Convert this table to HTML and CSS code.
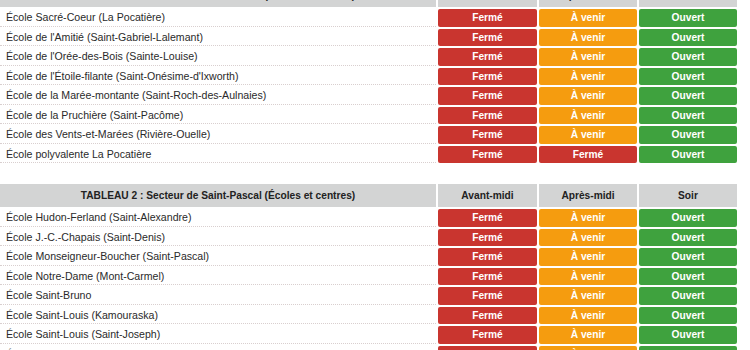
FILE: index.html
```html
<!DOCTYPE html>
<html lang="fr">
<head>
<meta charset="utf-8">
<title>État des écoles</title>
<link rel="stylesheet" href="styles.css">
</head>
<body>
<div class="page">
  <table class="status-table first">
    <colgroup><col class="c-name"><col class="c-am"><col class="c-pm"><col class="c-ev"></colgroup>
    <thead>
      <tr><th class="title">TABLEAU 1 : Secteur de La Pocatière (Écoles et centres)</th><th>Avant-midi</th><th>Après-midi</th><th>Soir</th></tr>
    </thead>
    <tbody>
      <tr><td class="name">École Sacré-Coeur (La Pocatière)</td><td class="st closed">Fermé</td><td class="st soon">À venir</td><td class="st open">Ouvert</td></tr>
      <tr><td class="name">École de l'Amitié (Saint-Gabriel-Lalemant)</td><td class="st closed">Fermé</td><td class="st soon">À venir</td><td class="st open">Ouvert</td></tr>
      <tr><td class="name">École de l'Orée-des-Bois (Sainte-Louise)</td><td class="st closed">Fermé</td><td class="st soon">À venir</td><td class="st open">Ouvert</td></tr>
      <tr><td class="name">École de l'Étoile-filante (Saint-Onésime-d'Ixworth)</td><td class="st closed">Fermé</td><td class="st soon">À venir</td><td class="st open">Ouvert</td></tr>
      <tr><td class="name">École de la Marée-montante (Saint-Roch-des-Aulnaies)</td><td class="st closed">Fermé</td><td class="st soon">À venir</td><td class="st open">Ouvert</td></tr>
      <tr><td class="name">École de la Pruchière (Saint-Pacôme)</td><td class="st closed">Fermé</td><td class="st soon">À venir</td><td class="st open">Ouvert</td></tr>
      <tr><td class="name">École des Vents-et-Marées (Rivière-Ouelle)</td><td class="st closed">Fermé</td><td class="st soon">À venir</td><td class="st open">Ouvert</td></tr>
      <tr><td class="name">École polyvalente La Pocatière</td><td class="st closed">Fermé</td><td class="st closed">Fermé</td><td class="st open">Ouvert</td></tr>
    </tbody>
  </table>

  <table class="status-table">
    <colgroup><col class="c-name"><col class="c-am"><col class="c-pm"><col class="c-ev"></colgroup>
    <thead>
      <tr><th class="title">TABLEAU 2 : Secteur de Saint-Pascal (Écoles et centres)</th><th>Avant-midi</th><th>Après-midi</th><th>Soir</th></tr>
    </thead>
    <tbody>
      <tr><td class="name">École Hudon-Ferland (Saint-Alexandre)</td><td class="st closed">Fermé</td><td class="st soon">À venir</td><td class="st open">Ouvert</td></tr>
      <tr><td class="name">École J.-C.-Chapais (Saint-Denis)</td><td class="st closed">Fermé</td><td class="st soon">À venir</td><td class="st open">Ouvert</td></tr>
      <tr><td class="name">École Monseigneur-Boucher (Saint-Pascal)</td><td class="st closed">Fermé</td><td class="st soon">À venir</td><td class="st open">Ouvert</td></tr>
      <tr><td class="name">École Notre-Dame (Mont-Carmel)</td><td class="st closed">Fermé</td><td class="st soon">À venir</td><td class="st open">Ouvert</td></tr>
      <tr><td class="name">École Saint-Bruno</td><td class="st closed">Fermé</td><td class="st soon">À venir</td><td class="st open">Ouvert</td></tr>
      <tr><td class="name">École Saint-Louis (Kamouraska)</td><td class="st closed">Fermé</td><td class="st soon">À venir</td><td class="st open">Ouvert</td></tr>
      <tr><td class="name">École Saint-Louis (Saint-Joseph)</td><td class="st closed">Fermé</td><td class="st soon">À venir</td><td class="st open">Ouvert</td></tr>
      <tr><td class="name">École Saint-Philippe (Saint-Philippe-de-Néri)</td><td class="st closed">Fermé</td><td class="st soon">À venir</td><td class="st open">Ouvert</td></tr>
    </tbody>
  </table>
</div>
</body>
</html>
```

FILE: styles.css
```css
html, body {
  margin: 0;
  padding: 0;
  background: #ffffff;
}

body {
  font-family: "Liberation Sans", Arial, sans-serif;
  color: #222222;
  overflow: hidden;
}

.page {
  margin: -18px 0 0 -2px;
}

.status-table {
  border-collapse: separate;
  border-spacing: 2px;
  table-layout: fixed;
  width: 741px;
  font-size: 10.6px;
}

.status-table.first {
  margin-bottom: 17px;
}

.c-name { width: 436px; }
.c-am { width: 99px; }
.c-pm { width: 98px; }
.c-ev { width: 98px; }

.status-table th {
  background: #d3d4d4;
  color: #222222;
  font-weight: bold;
  height: 23px;
  padding: 0;
  text-align: center;
  vertical-align: middle;
  font-size: 10.2px;
}

.status-table td {
  height: 16.5px;
  padding: 0;
  vertical-align: middle;
}

.name {
  text-align: left;
  padding-left: 6px !important;
  border-bottom: 1px dotted #d9cfcf;
  color: #2a2a2a;
  white-space: nowrap;
  overflow: hidden;
}

.st {
  text-align: center;
  color: #ffffff;
  font-weight: bold;
  font-size: 10.2px;
  border-radius: 2px;
}

.closed { background: #c9352f; }
.soon { background: #f59c0f; }
.open { background: #3fa23e; }
```
